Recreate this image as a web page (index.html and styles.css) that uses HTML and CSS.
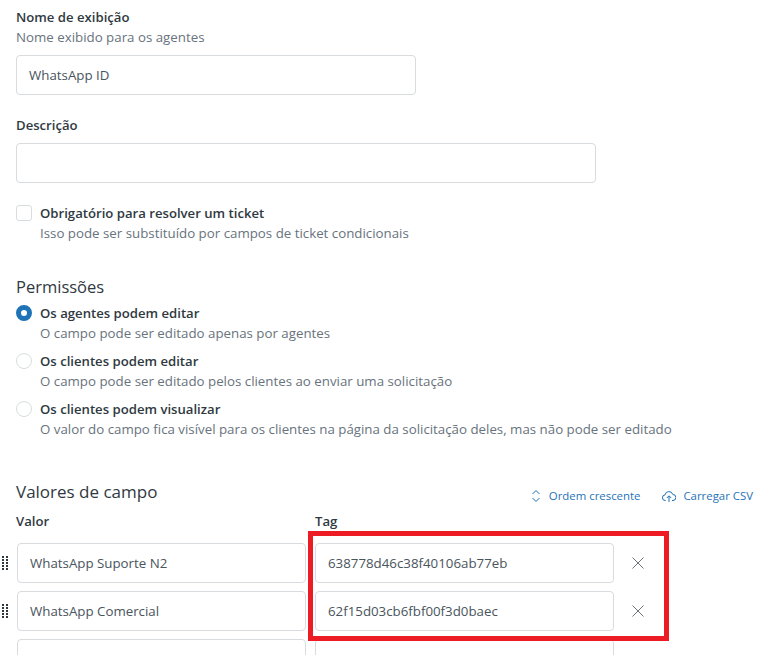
FILE: index.html
```html
<!DOCTYPE html>
<html lang="pt">
<head>
  <meta charset="UTF-8" />
  <title>Campo de ticket</title>
  <link rel="stylesheet" href="styles.css">
</head>
<body>
  <div class="container">
    <div class="field">
      <div class="label">Nome de exibição</div>
      <div class="hint">Nome exibido para os agentes</div>
      <div class="input short">WhatsApp ID</div>
    </div>

    <div class="field desc">
      <div class="label">Descrição</div>
      <div class="input medium"></div>
    </div>

    <div class="option check-option">
      <span class="checkbox"></span>
      <div>
        <div class="label">Obrigatório para resolver um ticket</div>
        <div class="hint">Isso pode ser substituído por campos de ticket condicionais</div>
      </div>
    </div>

    <h3 class="perm-title">Permissões</h3>
    <div class="option">
      <span class="radio checked"></span>
      <div>
        <div class="label">Os agentes podem editar</div>
        <div class="hint">O campo pode ser editado apenas por agentes</div>
      </div>
    </div>
    <div class="option">
      <span class="radio"></span>
      <div>
        <div class="label">Os clientes podem editar</div>
        <div class="hint">O campo pode ser editado pelos clientes ao enviar uma solicitação</div>
      </div>
    </div>
    <div class="option">
      <span class="radio"></span>
      <div>
        <div class="label">Os clientes podem visualizar</div>
        <div class="hint">O valor do campo fica visível para os clientes na página da solicitação deles, mas não pode ser editado</div>
      </div>
    </div>

    <div class="values-head">
      <h3>Valores de campo</h3>
      <div class="actions">
        <a class="action">
          <svg width="12" height="14" viewBox="0 0 12 14" fill="none" stroke="#1f73b7" stroke-width="1"><path d="M2.500 5 6 1.500 9.500 5M2.500 9 6 12.500 9.500 9"/></svg>
          Ordem crescente
        </a>
        <a class="action">
          <svg width="14" height="14" viewBox="0 0 14 14" fill="none" stroke="#1f73b7" stroke-width="1"><path d="M4 11.500H3.500A2.800 2.800 0 0 1 3 5.900 4 4 0 0 1 10.800 5.500 3 3 0 0 1 11 11.500H10M7 13V7M4.800 9 7 6.800 9.200 9"/></svg>
          Carregar CSV
        </a>
      </div>
    </div>

    <div class="value-grid head-row">
      <div class="label">Valor</div>
      <div class="label">Tag</div>
    </div>

    <div class="value-grid">
      <div class="input">WhatsApp Suporte N2</div>
      <div class="input">638778d46c38f40106ab77eb</div>
      <span class="remove"><svg width="12" height="12" viewBox="0 0 12 12" stroke="#68737d" stroke-width="1"><path d="M.5.5l11 11M11.500.5l-11 11"/></svg></span>
      <svg class="grip" width="6" height="14" viewBox="0 0 6 14" fill="#2f3941"><path d="M0 0h2v2H0zM4 0h2v2H4zM0 3h2v2H0zM4 3h2v2H4zM0 6h2v2H0zM4 6h2v2H4zM0 9h2v2H0zM4 9h2v2H4zM0 12h2v2H0zM4 12h2v2H4z"/></svg>
    </div>
    <div class="value-grid">
      <div class="input">WhatsApp Comercial</div>
      <div class="input">62f15d03cb6fbf00f3d0baec</div>
      <span class="remove"><svg width="12" height="12" viewBox="0 0 12 12" stroke="#68737d" stroke-width="1"><path d="M.5.5l11 11M11.500.5l-11 11"/></svg></span>
      <svg class="grip" width="6" height="14" viewBox="0 0 6 14" fill="#2f3941"><path d="M0 0h2v2H0zM4 0h2v2H4zM0 3h2v2H0zM4 3h2v2H4zM0 6h2v2H0zM4 6h2v2H4zM0 9h2v2H0zM4 9h2v2H4zM0 12h2v2H0zM4 12h2v2H4z"/></svg>
    </div>
    <div class="value-grid">
      <div class="input"></div>
      <div class="input"></div>
    </div>

    <div class="highlight"></div>
  </div>
</body>
</html>
```

FILE: styles.css
```css
html, body {
  height: 658px;
  overflow: hidden;
}
body {
  margin: 0;
  background: white;
  font-family: "Open Sans", "Noto Sans", sans-serif;
  font-size: 13.3px;
  line-height: 20px;
  color: #2f3941;
}
.container {
  position: relative;
  height: 648px;
  overflow: hidden;
  padding: 7px 0 0 16px;
}
.label {
  font-size: 13.15px;
  font-weight: 600;
}
.hint {
  color: #68737d;
}
.input {
  box-sizing: border-box;
  height: 40px;
  padding: 9px 12px;
  border: 1px solid #d8dcde;
  border-radius: 4px;
  background: white;
  color: #49545c;
}
.short {
  width: 400px;
  margin-top: 8px;
}
.medium {
  width: 580px;
  margin-top: 8px;
}
.desc {
  margin-top: 20px;
}
.option {
  display: flex;
  gap: 8px;
  margin-bottom: 8px;
}
.check-option {
  margin-top: 20px;
}
.checkbox, .radio {
  box-sizing: border-box;
  flex: none;
  width: 16px;
  height: 16px;
  margin-top: 2px;
  border: 1px solid #d8dcde;
}
.checkbox {
  border-radius: 3px;
}
.radio {
  border-radius: 50%;
}
.radio.checked {
  border: 5.5px solid #1f73b7;
}
h3 {
  margin: 0;
  font-size: 17px;
  font-weight: 400;
  line-height: 24px;
}
.perm-title {
  margin: 32px 0 4px;
  font-size: 16.5px;
}
.values-head {
  display: flex;
  justify-content: space-between;
  align-items: center;
  margin-top: 41px;
  padding-right: 16px;
}
.actions {
  display: flex;
  gap: 22px;
  padding-top: 4px;
  margin-bottom: -4px;
  font-size: 11.4px;
  color: #1f73b7;
}
.action {
  display: flex;
  align-items: center;
  gap: 7px;
}
.value-grid {
  position: relative;
  display: grid;
  grid-template-columns: 289px 299px;
  gap: 9px;
  margin: 0 0 8px 1px;
}
.head-row {
  margin: 7px 0 12px;
  grid-template-columns: 290px 299px;
}
.remove {
  position: absolute;
  left: 615px;
  top: 14px;
  display: flex;
}
.grip {
  position: absolute;
  left: -15px;
  top: 13px;
}
.highlight {
  position: absolute;
  left: 308px;
  top: 531px;
  box-sizing: border-box;
  width: 361px;
  height: 110px;
  border: 5px solid #ed1c24;
}
```
